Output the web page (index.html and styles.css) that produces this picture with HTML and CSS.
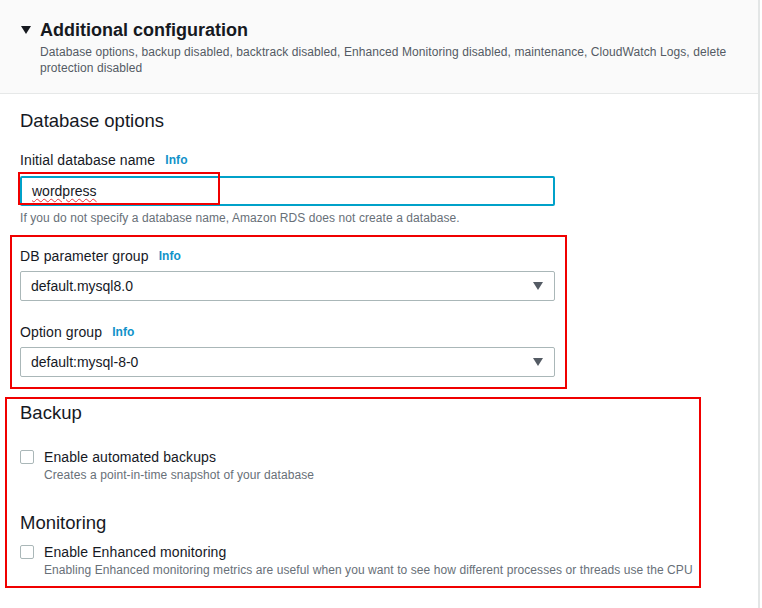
FILE: index.html
```html
<!DOCTYPE html>
<html>
<head>
<meta charset="utf-8">
<link rel="stylesheet" href="styles.css">
</head>
<body>
<div class="page">
  <div class="header">
    <div class="title-row">
      <span class="caret"></span>
      <h2 class="title">Additional configuration</h2>
    </div>
    <p class="desc">Database options, backup disabled, backtrack disabled, Enhanced Monitoring disabled, maintenance, CloudWatch Logs, delete protection disabled</p>
  </div>
  <div class="body">
    <h3 class="section">Database options</h3>
    <div class="field first">
      <div class="label">Initial database name <span class="info">Info</span></div>
      <div class="input"><span class="spell">wordpress</span></div>
      <div class="hint">If you do not specify a database name, Amazon RDS does not create a database.</div>
    </div>
    <div class="field">
      <div class="label">DB parameter group <span class="info">Info</span></div>
      <div class="select"><span>default.mysql8.0</span><span class="arrow"></span></div>
    </div>
    <div class="field last">
      <div class="label">Option group <span class="info">Info</span></div>
      <div class="select"><span>default:mysql-8-0</span><span class="arrow"></span></div>
    </div>
    <h3 class="section backup">Backup</h3>
    <div class="check first-check">
      <span class="box"></span>
      <div>
        <div class="check-label">Enable automated backups</div>
        <div class="check-sub">Creates a point-in-time snapshot of your database</div>
      </div>
    </div>
    <h3 class="section monitoring">Monitoring</h3>
    <div class="check second-check">
      <span class="box"></span>
      <div>
        <div class="check-label">Enable Enhanced monitoring</div>
        <div class="check-sub">Enabling Enhanced monitoring metrics are useful when you want to see how different processes or threads use the CPU</div>
      </div>
    </div>
  </div>
  <div class="mark mark-name"></div>
  <div class="mark mark-groups"></div>
  <div class="mark mark-backup"></div>
</div>
</body>
</html>
```
FILE: styles.css
```css
html, body {
  margin: 0;
  padding: 0;
  background: #ffffff;
}
body {
  font-family: "Liberation Sans", Arial, sans-serif;
  color: #16191f;
}
.page {
  position: relative;
  width: 760px;
  height: 608px;
  border-right: 2px solid #e3e6e6;
  box-sizing: border-box;
}
.header {
  background: #fafafa;
  border-bottom: 1px solid #e6e8e8;
  height: 94px;
  box-sizing: border-box;
  padding: 18px 20px 0 20px;
}
.title-row {
  display: flex;
  align-items: center;
  height: 24px;
}
.caret {
  width: 0;
  height: 0;
  border-left: 5px solid transparent;
  border-right: 5px solid transparent;
  border-top: 8px solid #16191f;
  margin-left: 1px;
  margin-right: 9px;
}
.title {
  margin: 0;
  font-size: 18px;
  line-height: 24px;
  font-weight: 700;
}
.desc {
  margin: 2px 0 0 20px;
  font-size: 12px;
  line-height: 16px;
  color: #545b64;
  letter-spacing: 0.08px;
}
.body {
  padding: 15px 20px 0 20px;
}
.section {
  margin: 0;
  font-size: 18.5px;
  line-height: 24px;
  font-weight: 400;
}
.field {
  margin-top: 20px;
  width: 535px;
}
.field.first {
  margin-top: 17px;
}
.field.last {
  margin-top: 21px;
}
.label {
  display: flex;
  align-items: center;
  height: 20px;
  font-size: 14px;
  line-height: 20px;
  margin-bottom: 5px;
  letter-spacing: 0.1px;
}
.field.first .label {
  margin-bottom: 6px;
}
.info {
  color: #1192c9;
  font-weight: 700;
  font-size: 12px;
  line-height: 16px;
  margin-left: 10px;
}
.input {
  height: 30px;
  box-sizing: border-box;
  border: 2px solid #00a1c9;
  border-radius: 2px;
  padding: 0 10px;
  display: flex;
  align-items: center;
  font-size: 14px;
}
.spell {
  text-decoration: underline wavy #e0383e;
  text-decoration-thickness: 1px;
  text-underline-offset: 2px;
}
.hint {
  margin-top: 4px;
  font-size: 12px;
  line-height: 16px;
  color: #687078;
  letter-spacing: 0.08px;
}
.select {
  height: 30px;
  box-sizing: border-box;
  border: 1px solid #aab7b8;
  border-radius: 2px;
  padding: 0 11px 0 10px;
  display: flex;
  align-items: center;
  justify-content: space-between;
  font-size: 14px;
}
.arrow {
  width: 0;
  height: 0;
  border-left: 5px solid transparent;
  border-right: 5px solid transparent;
  border-top: 8px solid #545b64;
}
.backup {
  margin-top: 24px;
}
.monitoring {
  margin-top: 28px;
}
.check {
  display: flex;
  align-items: flex-start;
}
.first-check {
  margin-top: 22px;
}
.second-check {
  margin-top: 7px;
}
.box {
  width: 14px;
  height: 14px;
  box-sizing: border-box;
  border: 1px solid #aab7b8;
  border-radius: 2px;
  margin-top: 3px;
  margin-right: 10px;
  flex: none;
}
.check-label {
  font-size: 14px;
  line-height: 20px;
  letter-spacing: 0.1px;
}
.check-sub {
  font-size: 12px;
  line-height: 16px;
  color: #687078;
  letter-spacing: 0.08px;
}
.mark {
  position: absolute;
  border: 2px solid #f00000;
  box-sizing: border-box;
}
.mark-name {
  left: 18px;
  top: 172px;
  width: 202px;
  height: 33px;
}
.mark-groups {
  left: 10px;
  top: 235px;
  width: 557px;
  height: 154px;
}
.mark-backup {
  left: 5px;
  top: 397px;
  width: 696px;
  height: 191px;
}
```
